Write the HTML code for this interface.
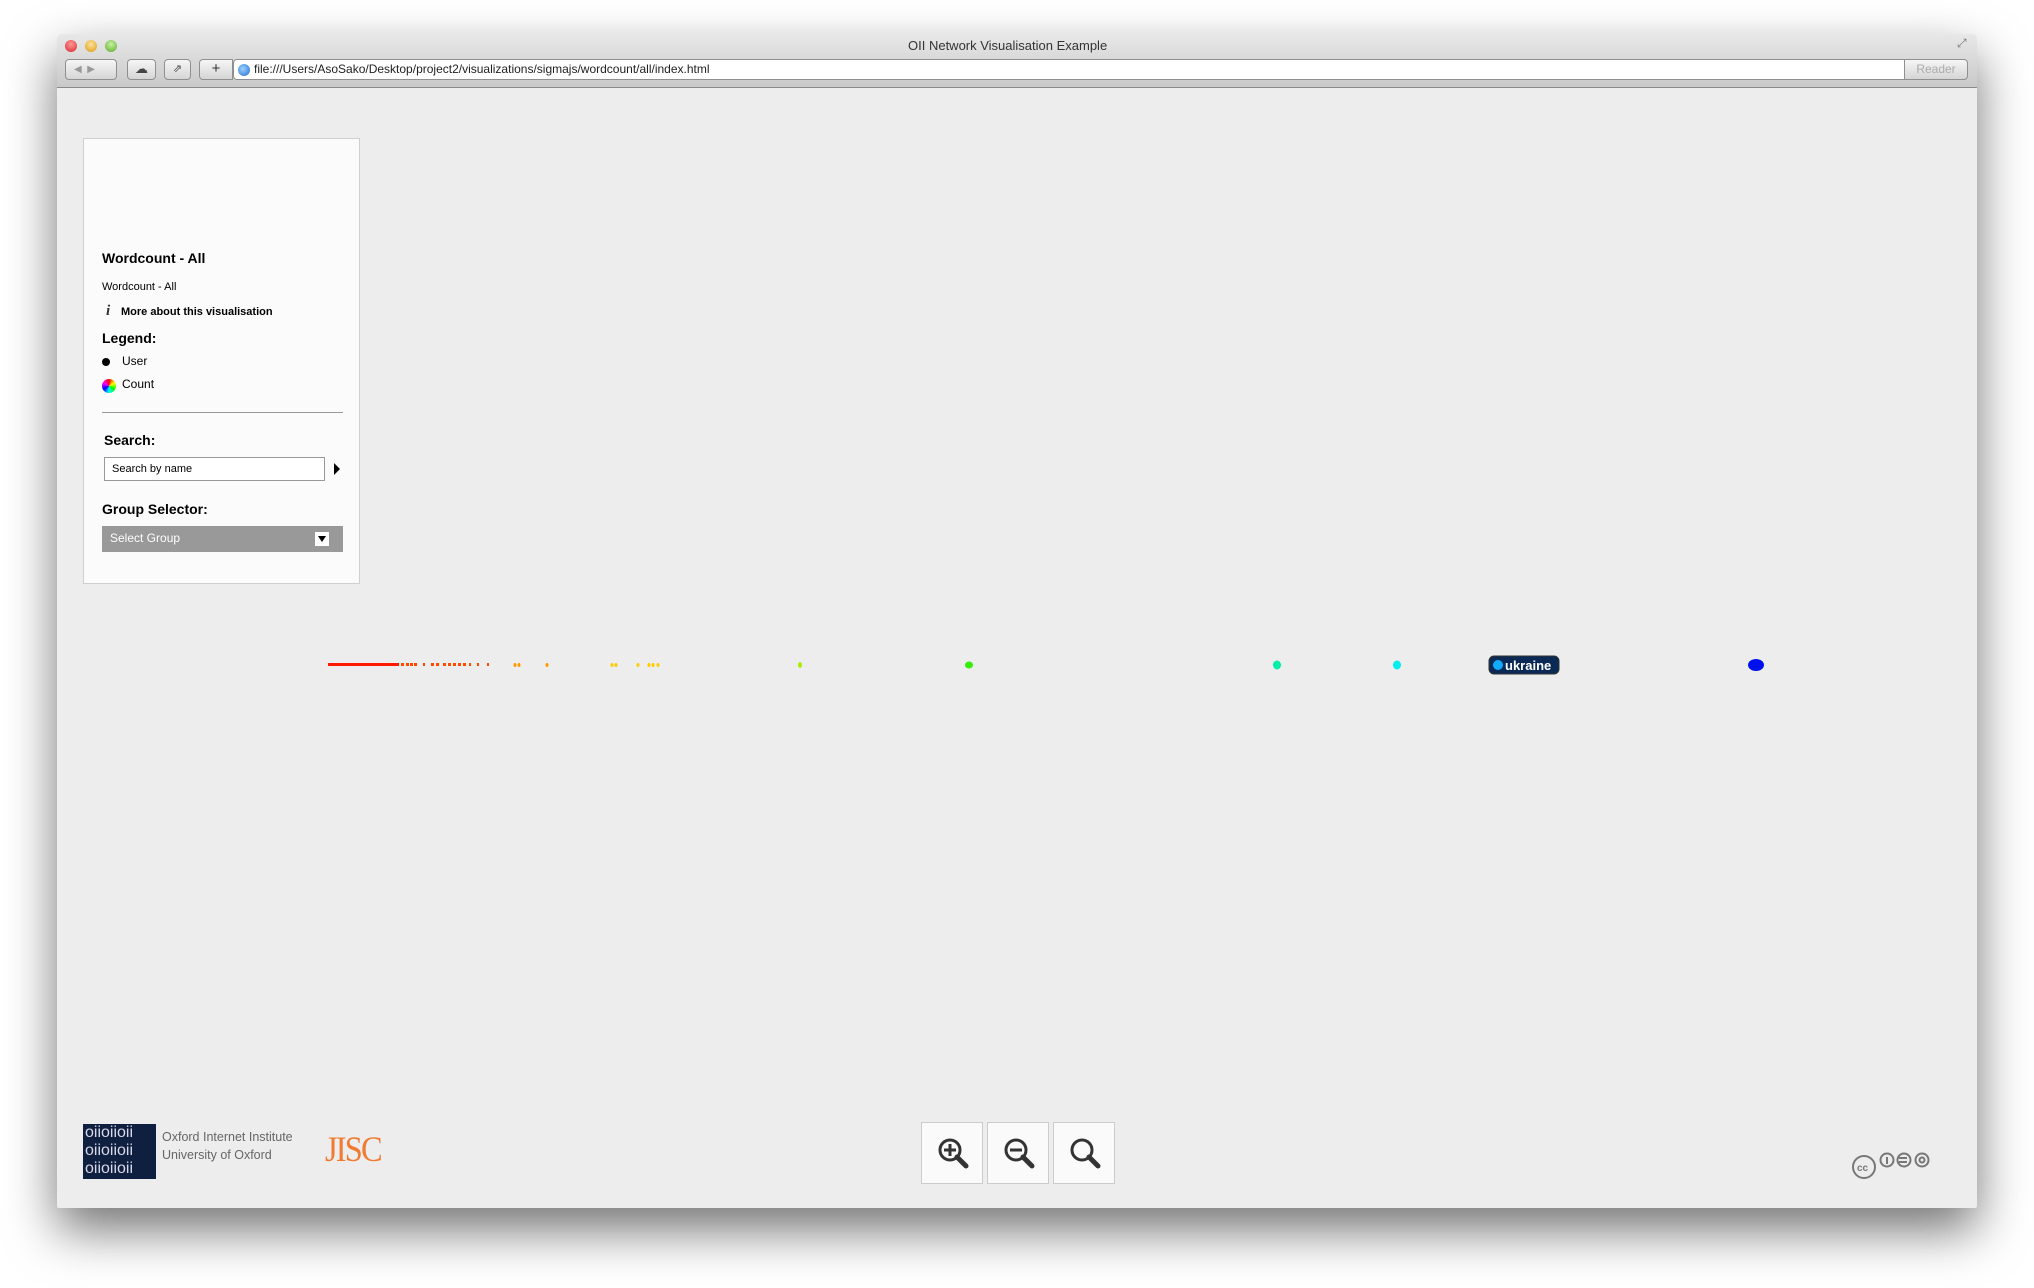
<!DOCTYPE html>
<html><head><meta charset="utf-8"><style>
*{margin:0;padding:0;box-sizing:border-box}
body{width:2034px;height:1288px;background:#fff;position:relative;overflow:hidden;font-family:"Liberation Sans",sans-serif}
.win{position:absolute;left:57px;top:34px;width:1920px;height:1174px;background:#ededed;border-radius:5px 5px 2px 2px;box-shadow:0 22px 50px rgba(0,0,0,.55);overflow:hidden}
.chrome{position:absolute;left:0;top:0;width:100%;height:54px;background:linear-gradient(#e8e8e8,#c9c9c9);border-bottom:1px solid #8a8a8a}
.tl{position:absolute;top:6px;width:12px;height:12px;border-radius:50%}
.btn{position:absolute;top:25px;height:21px;border:1px solid #8f8f8f;border-radius:4px;background:linear-gradient(#f6f6f6,#d5d5d5)}
.addr{position:absolute;left:176px;top:25px;width:1727px;height:21px;background:#fff;border:1px solid #8f8f8f;border-radius:4px 0 0 4px;font-size:12px;line-height:19px;padding-left:20px;color:#222}
.abs{position:absolute}
.panel{position:absolute;left:26px;top:104px;width:277px;height:446px;background:#fbfbfb;border:1px solid #cfcfcf}
.panel div{position:absolute;white-space:nowrap;color:#000}
.zb{position:absolute;top:1088px;width:62px;height:62px;background:#fafafa;border:1px solid #ccc}
</style></head><body>
<div class="win">
 <div class="chrome">
  <div class="tl" style="left:8px;background:radial-gradient(circle at 50% 35%,#ff9a9a,#d8252a)"></div>
  <div class="tl" style="left:28px;background:radial-gradient(circle at 50% 35%,#ffe29a,#d99a12)"></div>
  <div class="tl" style="left:48px;background:radial-gradient(circle at 50% 35%,#c8f2a0,#5aab2c)"></div>
  <div class="abs" style="left:851px;top:4px;font-size:13px;color:#333">OII Network Visualisation Example</div>
  <div class="abs" style="left:1900px;top:2px;font-size:12px;color:#777">⤢</div>
  <div class="btn" style="left:8px;width:52px;font-size:10px;color:#999;line-height:19px;padding-left:8px">◀ &nbsp;▶</div>
  <div class="btn" style="left:70px;width:29px;font-size:13px;text-align:center;line-height:18px;color:#444">☁</div>
  <div class="btn" style="left:107px;width:27px;font-size:11px;text-align:center;line-height:18px;color:#444">⇗</div>
  <div class="btn" style="left:142px;width:34px;border-radius:4px 0 0 4px;font-size:15px;text-align:center;line-height:18px;color:#333">+</div>
  <div class="addr">file:///Users/AsoSako/Desktop/project2/visualizations/sigmajs/wordcount/all/index.html
   <span class="abs" style="left:4px;top:4px;width:12px;height:12px;border-radius:50%;background:radial-gradient(circle at 40% 40%,#9cd0ff,#1f6fd0)"></span>
   <span class="abs" style="right:6px;top:0;font-size:13px;color:#555">↻</span></div>
  <div class="btn" style="left:1847px;width:64px;border-radius:0 4px 4px 0;font-size:12px;color:#aaa;text-align:center;line-height:19px">Reader</div>
 </div>
 <div class="panel">
  <div style="left:18px;top:111px;font-size:14px;font-weight:bold">Wordcount - All</div>
  <div style="left:18px;top:142px;font-size:11px">Wordcount - All</div>
  <div style="left:22px;top:164px;font-size:15px;font-style:italic;font-weight:bold;font-family:'Liberation Serif',serif;color:#333">i</div>
  <div style="left:37px;top:167px;font-size:11px;font-weight:bold">More about this visualisation</div>
  <div style="left:18px;top:191px;font-size:14px;font-weight:bold">Legend:</div>
  <div style="left:18px;top:219px;width:8px;height:8px;border-radius:50%;background:#000"></div>
  <div style="left:38px;top:215px;font-size:12px">User</div>
  <div style="left:18px;top:240px;width:14px;height:14px;border-radius:50%;background:conic-gradient(red,yellow,lime,cyan,blue,magenta,red)"></div>
  <div style="left:38px;top:238px;font-size:12px">Count</div>
  <div style="left:18px;top:273px;width:241px;height:1px;background:#999"></div>
  <div style="left:20px;top:293px;font-size:14px;font-weight:bold">Search:</div>
  <div style="left:20px;top:318px;width:221px;height:24px;border:1px solid #999;background:#fff;font-size:11px;line-height:22px;padding-left:7px">Search by name</div>
  <div style="left:250px;top:324px;width:0;height:0;border-left:6px solid #000;border-top:6px solid transparent;border-bottom:6px solid transparent"></div>
  <div style="left:18px;top:362px;font-size:14px;font-weight:bold">Group Selector:</div>
  <div style="left:18px;top:387px;width:241px;height:26px;background:#999;color:#fff;font-size:12px;line-height:25px;padding-left:8px">Select Group<span style="position:absolute;right:14px;top:6px;width:14px;height:14px;background:#fff"><span style="position:absolute;left:3px;top:4px;border-top:6px solid #000;border-left:4px solid transparent;border-right:4px solid transparent"></span></span></div>
 </div>
 <svg class="abs" style="left:0;top:0" width="1920" height="1174">
  <rect x="271" y="629" width="71" height="3" fill="#ff1a00"/>
  <g fill="#ff4a00">
   <rect x="344" y="629" width="3" height="3"/><rect x="349" y="629" width="3" height="3"/><rect x="353" y="629" width="3" height="3"/><rect x="357" y="629" width="3" height="3"/>
   <rect x="366" y="629" width="2" height="3"/><rect x="374" y="629" width="3" height="3"/><rect x="379" y="629" width="3" height="3"/><rect x="386" y="629" width="3" height="3"/><rect x="391" y="629" width="3" height="3"/><rect x="396" y="629" width="3" height="3"/><rect x="401" y="629" width="3" height="3"/><rect x="406" y="629" width="3" height="3"/><rect x="412" y="629" width="2" height="3"/><rect x="420" y="629" width="2" height="3"/><rect x="430" y="629" width="2" height="3"/>
  </g>
  <g fill="#ff9900"><ellipse cx="458" cy="631" rx="1.5" ry="2"/><ellipse cx="462" cy="631" rx="1.5" ry="2"/><ellipse cx="490" cy="631" rx="1.5" ry="2"/></g>
  <g fill="#ffcc00"><ellipse cx="555" cy="631" rx="1.5" ry="2"/><ellipse cx="559" cy="631" rx="1.5" ry="2"/><ellipse cx="581" cy="631" rx="1.5" ry="2"/><ellipse cx="592" cy="631" rx="1.5" ry="2"/><ellipse cx="596" cy="631" rx="1.5" ry="2"/><ellipse cx="601" cy="631" rx="1.5" ry="2"/></g>
  <ellipse cx="743" cy="631" rx="2" ry="3" fill="#aaee00"/>
  <ellipse cx="912" cy="631" rx="4" ry="3.5" fill="#33ee00"/>
  <ellipse cx="1220" cy="631" rx="4" ry="4.5" fill="#00eeaa"/>
  <ellipse cx="1340" cy="631" rx="4" ry="4.5" fill="#00eeee"/>
  <rect x="1432" y="622" width="70" height="18" rx="5" fill="#0a2a55" stroke="#333" stroke-width="1"/>
  <circle cx="1441" cy="631" r="5" fill="#12aaff"/>
  <text x="1448" y="636" font-family="Liberation Sans" font-weight="bold" font-size="13" fill="#fff">ukraine</text>
  <ellipse cx="1699" cy="631" rx="8" ry="6" fill="#0011ee"/>
 </svg>
 <div class="abs" style="left:26px;top:1090px;width:73px;height:55px;background:#0f1f3f;color:#d8d8e8;font-size:16px;line-height:18px;font-family:'Liberation Sans Narrow','Liberation Sans',sans-serif;padding-left:2px">oiioiioii<br>oiioiioii<br>oiioiioii</div>
 <div class="abs" style="left:105px;top:1094px;font-size:12.5px;color:#666;line-height:18px">Oxford Internet Institute<br>University of Oxford</div>
 <div class="abs" style="left:268px;top:1094px;font-size:36px;color:#f07a30;font-family:'Liberation Serif',serif;letter-spacing:-2px;transform:scaleX(.9);transform-origin:left">JISC</div>
 <div class="zb" style="left:864px"><svg width="62" height="62"><circle cx="28" cy="27" r="10" fill="none" stroke="#333" stroke-width="3"/><path d="M35 34 L44 43" stroke="#333" stroke-width="5" stroke-linecap="round"/><path d="M22 27H34M28 21V33" stroke="#333" stroke-width="3"/></svg></div>
 <div class="zb" style="left:930px"><svg width="62" height="62"><circle cx="28" cy="27" r="10" fill="none" stroke="#333" stroke-width="3"/><path d="M35 34 L44 43" stroke="#333" stroke-width="5" stroke-linecap="round"/><path d="M22 27H34" stroke="#333" stroke-width="3"/></svg></div>
 <div class="zb" style="left:996px"><svg width="62" height="62"><circle cx="28" cy="27" r="10" fill="none" stroke="#333" stroke-width="3"/><path d="M35 34 L44 43" stroke="#333" stroke-width="5" stroke-linecap="round"/></svg></div>
 <svg class="abs" style="left:1795px;top:1118px" width="90" height="30" fill="none" stroke="#777" stroke-width="2">
  <circle cx="12" cy="15" r="11"/><text x="5" y="19" font-family="Liberation Sans" font-weight="bold" font-size="10" fill="#777" stroke="none">cc</text>
  <circle cx="35" cy="8" r="6.5"/><path d="M35 5v7"/>
  <circle cx="52" cy="8" r="6.5"/><path d="M47 6h8M47 10h8"/>
  <circle cx="70" cy="8" r="6.5"/><circle cx="70" cy="8" r="2.5"/>
 </svg>
</div>
</body></html>
